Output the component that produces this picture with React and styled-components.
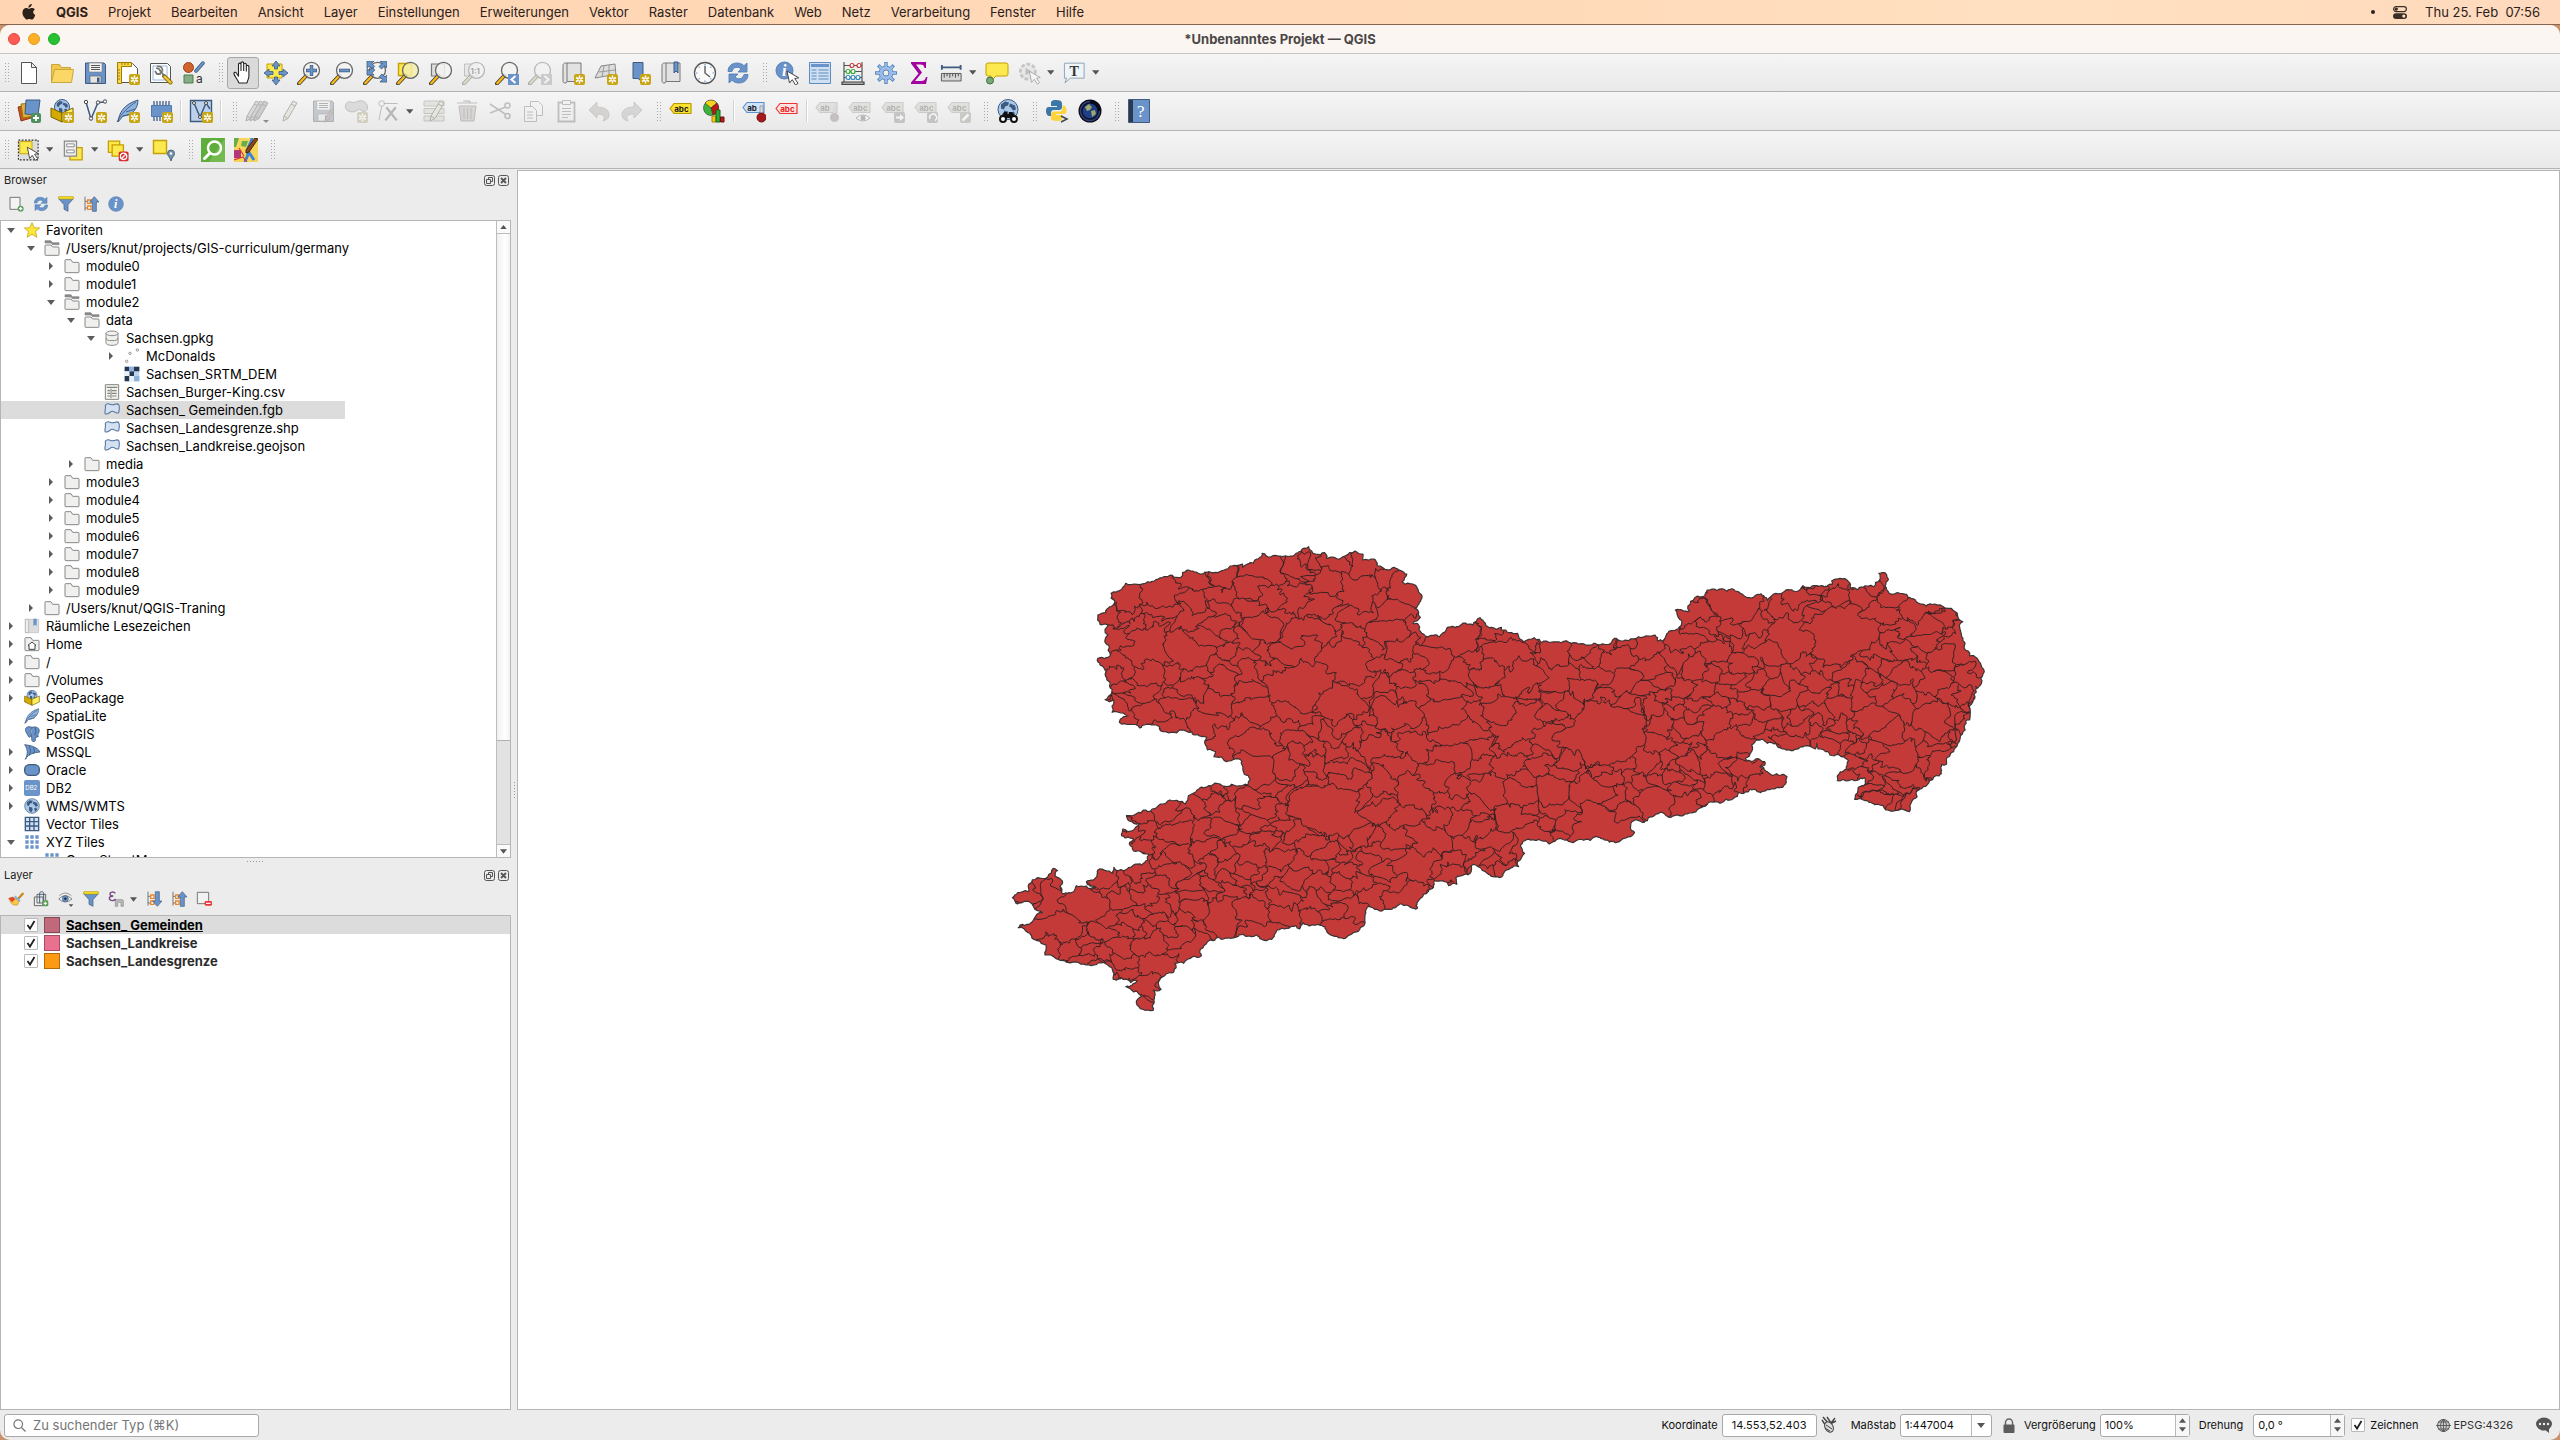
import React, { useState } from "react";
import styled, { createGlobalStyle, css } from "styled-components";

/* ------------------------------------------------------------------ */
/* Global                                                               */
/* ------------------------------------------------------------------ */

const GlobalStyle = createGlobalStyle`
  * { box-sizing: border-box; }
  html, body, #root { height: 100%; }
  body {
    margin: 0;
    overflow: hidden;
    background: #c9926c;
    color: #111;
    font-family: Inter, "Liberation Sans", sans-serif;
    font-size: 13px;
    line-height: 18px;
  }
  button, input, select { font: inherit; color: inherit; margin: 0; }
  button { padding: 0; border: 0; background: none; }
  ul { margin: 0; padding: 0; list-style: none; }
  svg { display: block; }
`;

const Desktop = styled.div`
  display: flex;
  flex-direction: column;
  height: 100vh;
`;

/* ------------------------------------------------------------------ */
/* System menu bar                                                      */
/* ------------------------------------------------------------------ */

const MenuBar = styled.header`
  display: flex;
  align-items: center;
  justify-content: space-between;
  flex: none;
  height: 25px;
  padding: 0 20px 0 22px;
  border-bottom: 1px solid #8a6450;
  background: linear-gradient(90deg, #ffd5b3, #ffdab9 60%, #ffe0c0 80%, #ffd9bd);
  color: #2b211b;
`;

const MenuList = styled.nav`
  display: flex;
  align-items: center;
  gap: 20px;
`;

const MenuItem = styled.button`
  font-weight: ${(p) => (p.$strong ? 700 : 400)};
  color: #2b211b;
`;

const MenuStatus = styled.div`
  display: flex;
  align-items: center;
  gap: 18px;
  white-space: pre;
`;

const Dot = styled.span`
  width: 4px;
  height: 4px;
  border-radius: 50%;
  background: #2b211b;
`;

const menus = [
  "Projekt", "Bearbeiten", "Ansicht", "Layer", "Einstellungen", "Erweiterungen",
  "Vektor", "Raster", "Datenbank", "Web", "Netz", "Verarbeitung", "Fenster", "Hilfe",
];

const Apple = () => (
  <svg width="14" height="16" viewBox="0 0 14 16" fill="#2b211b">
    <path d="M9.7 0c.1 1-.3 1.900-.9 2.600-.6.700-1.500 1.200-2.400 1.100-.1-.900.300-1.900.9-2.500C7.900.5 8.900 0 9.700 0zM12.900 5.400c-1 .6-1.700 1.500-1.700 2.700 0 1.400.9 2.500 2.100 3-.3 1-.8 1.900-1.400 2.800-.6.900-1.300 1.700-2.300 1.700-.9 0-1.200-.6-2.300-.6s-1.500.600-2.300.600c-1 0-1.700-.900-2.400-1.800C.9 12 .100 9.600.6 7.400 1 5.500 2.400 4.100 4.100 4.100c1 0 1.900.7 2.500.7.7 0 1.800-.8 3-.8 1.300 0 2.500.5 3.300 1.400z" />
  </svg>
);

const ControlCentre = () => (
  <svg width="14" height="13" viewBox="0 0 14 13">
    <rect x=".6" y=".6" width="12.800" height="5" rx="2.500" fill="none" stroke="#3b2e26" strokeWidth="1.200" />
    <circle cx="3.300" cy="3.100" r="1.700" fill="#3b2e26" />
    <rect x="0" y="7.200" width="14" height="5.800" rx="2.900" fill="#3b2e26" />
    <circle cx="10.800" cy="10.100" r="1.600" fill="#ffdfc2" />
  </svg>
);

/* ------------------------------------------------------------------ */
/* Window                                                               */
/* ------------------------------------------------------------------ */

const Window = styled.div`
  display: flex;
  flex-direction: column;
  flex: 1;
  min-height: 0;
  overflow: hidden;
  border-radius: 10px;
  background: #ececec;
`;

const TitleBar = styled.div`
  display: grid;
  grid-template-columns: 1fr auto 1fr;
  align-items: center;
  flex: none;
  height: 29px;
  padding: 0 8px;
  border-bottom: 1px solid #c9c5c3;
  background: #fcf6f3;
`;

const Lights = styled.div`
  display: flex;
  gap: 8px;
`;

const Light = styled.button`
  width: 12px;
  height: 12px;
  border-radius: 50%;
  border: 1px solid ${(p) => p.$edge};
  background: ${(p) => p.$fill};
`;

const WindowTitle = styled.h1`
  margin: 0;
  font-size: 13px;
  line-height: 18px;
  font-weight: 700;
  color: #4a4746;
`;

const ToolbarRow = styled.div`
  display: flex;
  align-items: center;
  flex: none;
  height: ${(p) => (p.$tall ? 39 : 38)}px;
  border-bottom: 1px solid #b4b4b4;
  background: linear-gradient(#f5f5f5, #e9e9e9);
`;

const Group = styled.div`
  display: flex;
  align-items: center;
  gap: 1px;
  margin-right: 4px;
`;

const Handle = styled.span`
  flex: none;
  width: 4px;
  height: 19px;
  margin: 0 3px 0 5px;
  background: conic-gradient(at 1px 1px, transparent 75%, #a8a8a8 0) 0 0 / 3px 3px;
`;

const Divider = styled.span`
  flex: none;
  width: 1px;
  height: 22px;
  margin: 0 2px 0 3px;
  background: #fff;
  box-shadow: -1px 0 0 #d2d2d2;
`;

const ToolButton = styled.button`
  display: flex;
  align-items: center;
  justify-content: flex-start;
  flex: none;
  width: ${(p) => (p.$menu ? 44 : 32)}px;
  height: 32px;
  padding: 0 3px;
  gap: 6px;
  border: 1px solid transparent;
  border-radius: 3px;
  ${(p) => p.$active && css`
    border-color: #a8a8a8;
    background: #dadada;
  `}
  & > svg:first-child { opacity: ${(p) => (p.disabled ? 0.4 : 1)}; filter: ${(p) => (p.disabled ? "grayscale(0.75)" : "none")}; }
`;

const Caret = ({ w = 8 }) => (
  <svg width={w} height="5" viewBox="0 0 8 5"><path d="M0 0h8L4 5z" fill="#555" /></svg>
);

/* ------------------------------------------------------------------ */
/* Icon parts                                                           */
/* ------------------------------------------------------------------ */

const BLUE = "#6a94c9";
const NAVY = "#3d5a80";
const GOLD = "#c4a000";
const YEL = "#fce94f";

const Star = ({ x = 13, y = 13 }) => (
  <g transform={`translate(${x} ${y})`}>
    <rect width="11" height="11" rx="2" fill="#c8a515" />
    <path d="M5.500 1.500v8M2 3.500l7 4M9 3.500l-7 4" stroke="#fff" strokeWidth="1.500" />
    <circle cx="5.500" cy="5.500" r="1" fill="#c8a515" />
  </g>
);

const Lens = ({ children, fill = "#f3f3f1" }) => (
  <g>
    <path d="M9.500 14.500 2 22.500" stroke="#3a3a3a" strokeWidth="4" strokeLinecap="round" />
    <path d="M9 15 2.300 22.200" stroke="#fcb912" strokeWidth="2.400" strokeLinecap="round" />
    <circle cx="14.500" cy="9.300" r="8" fill={fill} fillOpacity=".85" stroke="#666" strokeWidth="1.300" />
    {children}
  </g>
);

const Cursor = ({ x = 11, y = 10 }) => (
  <path transform={`translate(${x} ${y})`} d="M0 0l2.500 12 2.800-3.300L8.500 14l2.500-1.700L7.700 7.600l4-.8z" fill="#fff" stroke="#444" strokeLinejoin="round" />
);

const Tag = ({ fill, edge, ink, text = "abc" }) => (
  <g>
    <path d="M1 8.500 5 3.500h17v10H5z" fill={fill} stroke={edge} strokeWidth="1.200" strokeLinejoin="round" />
    <text x="5.200" y="11.500" fontFamily="Inter, sans-serif" fontSize="8" fontWeight="700" fill={ink}>{text}</text>
  </g>
);

const Pencil = ({ x = 0, y = 0, fill = "#e8dc7a" }) => (
  <path transform={`translate(${x} ${y})`} d="M4 22l1-5L14 2l4 2-9 15.500zM5 17l4 2.500M12 5l4 2" fill={fill} stroke="#555" strokeLinejoin="round" />
);

const Globe = ({ cx = 12, cy = 12, r = 10 }) => (
  <g>
    <circle cx={cx} cy={cy} r={r} fill="#a9c8ea" stroke={NAVY} />
    <path
      transform={`translate(${cx - r} ${cy - r}) scale(${r / 10})`}
      d="M3 5l4-3 4 1-1 3-3 1-1 3-3-1zM12 4l5 2 1 4-3 1-2-3-2-1zM6 11l4 1 1 3-2 4-3-3zM13 13l3-1 1 3-3 3z"
      fill={NAVY}
    />
  </g>
);

const Refresh = () => (
  <g fill={BLUE} stroke="#4b79b0" strokeWidth=".8">
    <path d="M2 10.500C2 5 6 2 11 2c3 0 5 1 7 2.700L21 2v9h-9l3-3c-3-3-8-2-9 2.500z" />
    <path d="M22 13.500C22 19 18 22 13 22c-3 0-5-1-7-2.700L3 22v-9h9l-3 3c3 3 8 2 9-2.500z" />
  </g>
);

const Page = () => (
  <path d="M4.500 1.500h10l5 5v16h-15z M14.500 1.500v5h5" fill="#fff" stroke="#555" strokeLinejoin="round" />
);

const Floppy = () => (
  <g>
    <path d="M2.500 2h18.500l1.500 1.500v19h-20z" fill={BLUE} stroke={NAVY} />
    <path d="M6 2h13v9H6z" fill="#f4f4f4" stroke="#777" strokeWidth=".6" />
    <path d="M8 4.500h9M8 6.500h9M8 8.500h9" stroke="#555" />
    <path d="M7 15h11v7H7z" fill="#e4e4e4" stroke="#555" strokeWidth=".6" />
    <path d="M14 16.500h2.500v5H14z" fill={NAVY} />
  </g>
);

const Book = () => (
  <g>
    <path d="M2 4.500C2 3 3 2 4.500 2H20v18.500H6L5 22H3.500C2.500 22 2 21 2 20z" fill="#e2e2e2" stroke="#777" />
    <path d="M6 2v18.500" stroke="#777" />
  </g>
);

const Arrows4 = ({ children }) => (
  <g fill={BLUE} stroke={NAVY} strokeWidth=".8" strokeLinejoin="round">{children}</g>
);

const Feather = () => (
  <g>
    <path d="M2 23C3 14 8 5 22 1c0 7-4 15-15 16z" fill="#8db4e0" stroke={NAVY} />
    <path d="M1 23C5 15 12 8 20 3M7 17l9-2M10 13l9-3" stroke={NAVY} fill="none" strokeWidth=".9" />
  </g>
);

const PkgBox = () => (
  <g>
    <Globe cx={12} cy={8} r={7.5} />
    <path d="M1 9l11 5v9L1 18z" fill="#d4aa00" stroke="#7a6200" strokeLinejoin="round" />
    <path d="M23 9l-11 5v9l11-5z" fill="#fff060" stroke="#7a6200" strokeLinejoin="round" />
  </g>
);

const Speech = ({ fill, edge }) => (
  <path d="M3 2h18q2 0 2 2v9q0 2-2 2H11l-5 5V15H3q-2 0-2-2V4q0-2 2-2z" fill={fill} stroke={edge} />
);

/* Drawings on a 24 unit grid */
const glyphs = {
  newDoc: <Page />,
  open: (
    <g stroke="#c9a63c" strokeLinejoin="round">
      <path d="M1.500 21.500v-18h8l2 3h9v4" fill="#f2c84b" />
      <path d="M1.500 21.500l3-13h19l-2 13z" fill="#fbd866" />
    </g>
  ),
  save: <Floppy />,
  layout: (
    <g>
      <path d="M5.500 2.500h11l5 5v14h-16z" fill="#fff" stroke="#555" />
      <path d="M1.500 1.500h14v4h-10v17h-4z" fill="#f7d64a" stroke="#a07d00" />
      <path d="M6 2v2M9 2v2M12 2v2M2 9h2M2 12h2M2 15h2M2 18h2" stroke="#a07d00" />
      <Star />
    </g>
  ),
  layoutMgr: (
    <g>
      <path d="M1.500 2.500h17l3 3v16h-20z" fill="#fff" stroke="#555" />
      <path d="M4 5h14v14H4z" fill="none" stroke="#9ab6e0" />
      <path d="M15 15l6.500 6.500" stroke="#8a6d00" strokeWidth="4" strokeLinecap="round" />
      <path d="M15.500 15.500l6 6" stroke="#f1c53d" strokeWidth="2.400" strokeLinecap="round" />
      <path d="M7 7l3 1 2 3-1 2-3 0-2-3M10 8l5.500 7M8 5.500c4-1 6 2 5.500 5" fill="none" stroke="#777" strokeWidth="1.800" />
    </g>
  ),
  style: (
    <g>
      <circle cx="6.500" cy="6.500" r="5" fill="#d0622e" stroke="#9c4319" />
      <path d="M14 10l7-8" stroke={NAVY} strokeWidth="3.500" strokeLinecap="round" />
      <path d="M14 10l7-8" stroke={BLUE} strokeWidth="2" strokeLinecap="round" />
      <path d="M2 14h9v8H2z" fill="#86ad86" stroke="#4c7a4c" />
      <text x="14" y="22" fontFamily="Inter, sans-serif" fontSize="12" fill="#333">a</text>
    </g>
  ),
  hand: (
    <path d="M8 22c-1-3-4-6-5-9-.6-1.800 1.600-2.300 2.500-.8l2 3V3.500c0-1.800 2.500-1.800 2.500 0V2.200c0-1.800 2.700-1.800 2.700 0v1.300c0-1.600 2.600-1.600 2.600 0v2c0-1.600 2.600-1.500 2.600 0V15c0 3-1.400 4-1.900 7z M10 3.500V10M12.700 3.500V10M15.300 5.500V10.500" fill="#fff" stroke="#222" strokeWidth="1.100" strokeLinejoin="round" />
  ),
  panSel: (
    <g>
      <path d="M3 3h15v14H3z" fill={YEL} stroke={GOLD} />
      <Arrows4><path d="M12 0l4 5h-2.500v3h-3V5H8zM12 24l-4-5h2.500v-3h3v3H16zM0 12l5-4v2.500h4v3H5V16zM24 12l-5 4v-2.500h-4v-3h4V8z" /></Arrows4>
    </g>
  ),
  zoomIn: <Lens><path d="M14.500 4v11M9 9.500h11" stroke={NAVY} strokeWidth="3.400" /><path d="M14.500 4.600v9.800M9.600 9.500h9.800" stroke={BLUE} strokeWidth="2" /></Lens>,
  zoomOut: <Lens><path d="M9 9.500h11" stroke={NAVY} strokeWidth="3.600" /><path d="M9.600 9.500h9.800" stroke={BLUE} strokeWidth="2" /></Lens>,
  zoomFull: (
    <Lens>
      <Arrows4>
        <path d="M4 0h7L8.700 2.500l3 3-2.500 2.500-3-3L4 7zM24 0v7l-2.400-2-3 3L16 5.500l3-3L17 0zM24 21h-7l2.300-2.500-3-3L19 13l3 3 2-2zM4 14V7.500l2.300 2 3-3 2.500 2.500-3 3 2.200 2z" />
      </Arrows4>
    </Lens>
  ),
  zoomSel: <g><path d="M2.500 2.500h13v12h-13z" fill={YEL} stroke={GOLD} strokeWidth="1.400" /><Lens fill="#f5efab" /></g>,
  zoomLayer: <g><path d="M2.500 3h13v12h-13z" fill="#ddd" stroke="#777" strokeWidth="1.200" /><Lens /></g>,
  zoomOne: (
    <g><path d="M2.500 3h13v12h-13z" fill="#ddd" stroke="#777" /><Lens><text x="8.500" y="12.500" fontFamily="Inter, sans-serif" fontSize="8" fontWeight="700" fill="#333">1:1</text></Lens></g>
  ),
  zoomLast: <g><Lens /><path d="M13 13h11v11H13z" fill={BLUE} /><path d="M20.500 15l-4 3.500 4 3.500" fill="none" stroke="#fff" strokeWidth="2" /></g>,
  zoomNext: <g><Lens /><path d="M13 13h11v11H13z" fill="#999" /><path d="M16.500 15l4 3.500-4 3.500" fill="none" stroke="#fff" strokeWidth="2" /></g>,
  newMap: <g><Book /><Star /></g>,
  new3d: <g><path d="M1 17L7 5l14-2 1 12-10 0z" fill="#ddd" stroke="#888" /><path d="M5 11l16-2M10 5L8 16M15 4v12" stroke="#999" fill="none" /><Star /></g>,
  newBookmark: <g><path d="M6 1.500h10v20l-5-4-5 0z" fill={BLUE} stroke={NAVY} /><Star /></g>,
  bookmarks: <g><Book /><path d="M14 1h4v11l-2-2-2 2z" fill={BLUE} stroke={NAVY} /></g>,
  clock: (
    <g>
      <circle cx="12" cy="12" r="10.500" fill="#fafafa" stroke="#555" strokeWidth="1.300" />
      <path d="M12 5v7l5 4" fill="none" stroke="#666" strokeWidth="1.500" />
      <path d="M12 3v1.500M12 19.500V21M3 12h1.500M19.500 12H21M5.600 5.600l1 1M18.400 5.600l-1 1M5.600 18.400l1-1M18.400 18.400l-1-1" stroke="#6a94c9" strokeWidth="1.200" />
    </g>
  ),
  refresh: <Refresh />,
  identify: (
    <g>
      <circle cx="9.500" cy="9.500" r="8.500" fill={BLUE} stroke="#557fb4" />
      <text x="7" y="15" fontFamily="Liberation Serif, serif" fontSize="16" fontWeight="700" fontStyle="italic" fill="#fff">i</text>
      <Cursor x={12} y={10} />
    </g>
  ),
  table: (
    <g>
      <path d="M1.500 1.500h21v21h-21z" fill="#cfe0f3" stroke="#5f8cc0" />
      <path d="M3 3h18v3H3z" fill={BLUE} />
      <path d="M3.500 9h5M10.500 9h10M3.500 12h5M10.500 12h10M3.500 15h5M10.500 15h10M3.500 18h5M10.500 18h10" stroke="#5f8cc0" strokeWidth="1.200" />
    </g>
  ),
  abacus: (
    <g fill="none" strokeWidth="1.200">
      <path d="M3 1v20M21 1v20M3 4.500h18M3 10.500h18M3 16.500h18" stroke="#555" />
      <path d="M1 21h22v2.500H1z" fill="#aaa" stroke="#444" />
      <g fill="#fff"><circle cx="11" cy="4.500" r="2" stroke="#c33" /><circle cx="18" cy="4.500" r="2" stroke="#c33" /><circle cx="7" cy="10.500" r="2" stroke="#3a3" /><circle cx="12" cy="10.500" r="2" stroke="#3a3" /><circle cx="7" cy="16.500" r="2" stroke="#38b" /><circle cx="12" cy="16.500" r="2" stroke="#38b" /><circle cx="17" cy="16.500" r="2" stroke="#38b" /></g>
    </g>
  ),
  gear: (
    <g>
      <g stroke="#5b87bf" strokeWidth="3.400">
        <path d="M12 1v22M1 12h22M4.200 4.200l15.600 15.600M19.800 4.200L4.200 19.800" />
      </g>
      <circle cx="12" cy="12" r="7" fill="#9abce6" stroke="#5b87bf" />
      <g stroke="#9abce6" strokeWidth="1.800"><path d="M12 2v20M2 12h20M5 5l14 14M19 5L5 19" /></g>
      <circle cx="12" cy="12" r="3" fill="#eee" stroke="#5b87bf" />
    </g>
  ),
  sigma: <path d="M4 1h15v6h-1.500c-.5-2.500-1.500-3.500-4-3.500H9l6 8-7 8.500h6c3 0 4-1 5-4h1.500L19 23H4v-1.500L11.500 12.500 4 2.500z" fill="#a4009f" />,
  measure: (
    <g>
      <path d="M2 6h20M2 3.500v5M22 3.500v5" stroke={NAVY} strokeWidth="2" />
      <path d="M1.500 12.500h21v8h-21z" fill="#d6d6d6" stroke="#555" />
      <path d="M4.500 13v4M7.500 13v2.500M10.500 13v4M13.500 13v2.500M16.500 13v4M19.500 13v2.500" stroke="#444" />
    </g>
  ),
  tip: <g><Speech fill={YEL} edge={GOLD} /><circle cx="5" cy="19.500" r="3.500" fill="#78a878" stroke="#3f6f3f" /></g>,
  action: (
    <g>
      <circle cx="10.500" cy="10.500" r="8" fill="#ddd" stroke="#888" strokeWidth="3" strokeDasharray="4 2" />
      <path d="M8 6.500l6.500 4L8 14.500z" fill="#777" />
      <Cursor x={12} y={10} />
    </g>
  ),
  annot: (
    <g>
      <path d="M1.500 1.500h21v16H8l-6 5 2-5H1.500z" fill="#eef4f8" stroke="#8aa0b0" />
      <text x="7" y="15" fontFamily="Liberation Serif, serif" fontSize="15" fontWeight="700" fill="#333">T</text>
    </g>
  ),
  dataSource: (
    <g>
      <path d="M1 8l10-2 3 13-10 3z" fill="#c8551f" stroke="#8d3a12" />
      <path d="M4 5l12-1 1 13-11 2z" fill="#e0b03a" stroke="#9a7510" />
      <path d="M9 1l14-0-2 15-13-1z" fill={BLUE} stroke={NAVY} />
      <rect x="14" y="14" width="10" height="10" rx="2" fill="#4d8f5d" />
      <path d="M19 16v6M16 19h6" stroke="#fff" strokeWidth="1.800" />
    </g>
  ),
  geopkg: <g><PkgBox /><Star /></g>,
  shapefile: (
    <g>
      <path d="M3 3l5 17L15 3.500 22 3" fill="none" stroke={NAVY} strokeWidth="1.500" />
      <g fill="#fff" stroke="#444"><circle cx="3" cy="3" r="1.700" /><circle cx="8" cy="19.500" r="1.700" /><circle cx="15" cy="3.500" r="1.700" /><circle cx="22" cy="2.500" r="1.700" /></g>
      <Star />
    </g>
  ),
  spatialite: <g><Feather /><Star /></g>,
  memory: (
    <g>
      <path d="M5 2v20M8 2v20M11 2v20M14 2v20M17 2v20M20 2v20" stroke={NAVY} strokeWidth="1.300" />
      <path d="M2.500 6.500h20v11h-20z" fill={BLUE} stroke="#4f7ab0" />
      <Star />
    </g>
  ),
  virtual: (
    <g>
      <path d="M1.500 1.500h21v21h-21z" fill="#bdd2ea" stroke={NAVY} strokeWidth="1.400" />
      <path d="M5 4l6 14L17 4l4 6" fill="none" stroke={NAVY} strokeWidth="1.500" />
      <g fill="#fff" stroke="#444"><circle cx="5" cy="4" r="1.500" /><circle cx="11" cy="18" r="1.500" /><circle cx="17" cy="4" r="1.500" /></g>
      <Star />
    </g>
  ),
  edits: <g><Pencil x={-3} fill="#c9b9a9" /><Pencil x={1} fill="#b8a0a0" /><Pencil x={5} fill="#a89090" /><path d="M18 21h6l-3 3z" fill="#000" /></g>,
  pencil: <Pencil x={1} />,
  saveEdits: <g><Floppy /><g transform="translate(11 9) scale(.65)"><Pencil fill="#d9735a" /></g></g>,
  addPoly: <g><path d="M2 5c3-5 6 0 10-2s9-2 11 3-2 8-5 6-3-2-6 0-13 1-10-7z" fill="#bbb" stroke="#777" /><Star /></g>,
  vertex: <g fill="none" stroke="#666"><path d="M7 4h15M5 7L2 22" /><circle cx="5" cy="4" r="3" /><path d="M10 8l11 14M20 8L9 22" strokeWidth="2.500" /></g>,
  modify: <g><path d="M2 2h20v5H2zM2 9.500h20v5H2zM2 17h20v5H2z" fill="#d8d3a0" stroke="#888" /><Pencil x={4} /></g>,
  del: <g fill="#c9a9a9" stroke="#9a6a6a"><path d="M2 4h20M8 2h7v2M4 7h17l-2 15H6z" /><path d="M9 9v11M12.500 9v11M16 9v11" /></g>,
  cut: <g fill="none" stroke="#777" strokeWidth="1.600"><path d="M2 5l15 10M2 14l16-6" /><circle cx="19.500" cy="6.500" r="2.500" /><circle cx="19.500" cy="17" r="2.500" /></g>,
  copy: <g fill="#f4f4f4" stroke="#777"><path d="M9.500 2.500h8l4 4v10h-12z" /><path d="M3.500 7.500h8l4 4v11h-12z" /><path d="M6 13h6M6 16h6M6 19h6" /></g>,
  paste: <g fill="#f0f0f0" stroke="#777"><path d="M4.500 3.500h16v19h-16z" strokeWidth="1.800" /><path d="M8.500 1.500h8v4h-8z" /><path d="M8 9.500h9M8 12.500h9M8 15.500h9M8 18.500h6" /></g>,
  undo: <path d="M2 11l8-8v5c8 0 12 3 12 8 0 3-2 5-6 6 3-5 0-7-6-7v4z" fill="#b7a9a0" stroke="#9b8d85" />,
  redo: <path d="M22 11l-8-8v5c-8 0-12 3-12 8 0 3 2 5 6 6-3-5 0-7 6-7v4z" fill="#a9b3a9" stroke="#8a958a" />,
  label: <g transform="translate(0 1)"><Tag fill="#fbe12d" edge="#b89b00" ink="#222" /></g>,
  diagram: (
    <g>
      <circle cx="9" cy="9" r="7.500" fill="#3cb43c" stroke="#333" strokeWidth=".6" />
      <path d="M9 9L3 4a7.500 7.500 0 0 1 12 0z" fill="#f5d21f" stroke="#333" strokeWidth=".6" />
      <path d="M9 9l6-5a7.500 7.500 0 0 1-4 12z" fill="#c01818" stroke="#333" strokeWidth=".6" />
      <path d="M10 17h4v6h-4z" fill="#f5c21f" stroke="#a80" /><path d="M14 11h4v12h-4z" fill="#3a3" stroke="#161" /><path d="M18.500 18H22v5h-3.500z" fill="#c01818" stroke="#611" />
    </g>
  ),
  pinLabel: <g><Tag fill="#cfe3fb" edge="#5b8fd0" ink="#222" text="ab" /><path d="M18 7h3v9h-3z" fill="#ddd" stroke="#777" strokeWidth=".6" /><circle cx="19.500" cy="18.500" r="4.500" fill="#a8181c" stroke="#6b0e10" /></g>,
  unplaced: <g transform="translate(0 1)"><Tag fill="#ffe3e3" edge="#e33" ink="#e22" /></g>,
  lab1: <g><Tag fill="#ccc9a4" edge="#999" ink="#555" text="ab" /><path d="M18 7h3v9h-3z" fill="#bbb" /><circle cx="19.500" cy="18.500" r="4.500" fill="#a77" /></g>,
  lab2: <g><Tag fill="#ccc9a4" edge="#999" ink="#555" /><path d="M8 19q7-6 14 0-7 6-14 0z" fill="#fff" stroke="#666" /><circle cx="15" cy="19" r="2.500" fill="#666" /></g>,
  lab3: <g><Tag fill="#ccc9a4" edge="#999" ink="#555" /><rect x="13" y="13" width="11" height="11" rx="2" fill="#888" /><path d="M15 17.500h4V15l4 3.500-4 3.500v-2.500h-4z" fill="#fff" /></g>,
  lab4: <g><Tag fill="#ccc9a4" edge="#999" ink="#555" /><rect x="13" y="13" width="11" height="11" rx="2" fill="#888" /><path d="M16 20a3.500 3.500 0 1 1 5 1.500" fill="none" stroke="#fff" strokeWidth="1.600" /></g>,
  lab5: <g><Tag fill="#ccc9a4" edge="#999" ink="#555" /><rect x="13" y="13" width="11" height="11" rx="2" fill="#999570" /><path d="M15.500 21.500l6-6" stroke="#fff" strokeWidth="2.500" /></g>,
  metasearch: (
    <g>
      <Globe cx={12} cy={10.5} r={10} />
      <path d="M4 19l4-6h3v2h2v-2h3l5 6z" fill="#111" />
      <g fill="#fff" stroke="#111" strokeWidth="2"><circle cx="7" cy="20" r="3" /><circle cx="18" cy="20" r="3" /></g>
    </g>
  ),
  python: (
    <g>
      <path d="M11 1c-5 0-5 2-5 3.500V7h6v1H3.500C1 8 1 11 1 12.500S2 17 4 17h2v-3c0-2 1-3 3-3h5c2 0 3-1 3-3V4.500C17 2 15 1 11 1z" fill="#3b78a8" />
      <path d="M12 22c5 0 5-2 5-3.500V16h-6v-1h7.500c3 0 3-2.500 3-4s-1-4.500-3-4.500h-1v3c0 2-1 3-3 3H9c-2 0-3 1-3 3v4C6 21 8 22 12 22z" fill="#fdd43b" />
      <path d="M16 17l6 3-6 3" fill="none" stroke="#444" strokeWidth="1.500" />
    </g>
  ),
  earth: (
    <g>
      <circle cx="12" cy="12" r="11.500" fill="#0a0a18" />
      <circle cx="12" cy="12" r="7.500" fill="#1d3f86" />
      <path d="M7 8l4-3 3 3-2 3-3 1zM13 12l4-1 1 4-4 3z" fill="#9aa86a" />
      <path d="M12 2.500a9.500 9.500 0 1 0 9.500 9.500" fill="none" stroke="#34407c" strokeWidth="1.500" />
    </g>
  ),
  help: (
    <g>
      <path d="M1.500 .5h21v23h-21z" fill={BLUE} stroke={NAVY} />
      <path d="M2 1h4v22H2z" fill="#2b3a4c" />
      <text x="10" y="18" fontFamily="Liberation Serif, serif" fontSize="17" fill="#fff">?</text>
    </g>
  ),
  select: (
    <g>
      <path d="M1.500 1.500h21v21h-21z" fill="#ddd" stroke="#333" strokeDasharray="2 1.500" strokeWidth="1.200" />
      <path d="M3 3h13v13H3z" fill={YEL} stroke={GOLD} />
      <Cursor x={11} y={9} />
    </g>
  ),
  selForm: (
    <g>
      <path d="M8.500 9.500h13v13h-13z" fill={YEL} stroke={GOLD} strokeWidth="1.400" />
      <path d="M2.500 2.500h13v16h-13z" fill="#eee" stroke="#888" strokeWidth="1.300" />
      <path d="M5 5.500h8v3H5zM5 12h8v3H5z" fill="#fff" stroke="#888" />
    </g>
  ),
  deselect: (
    <g>
      <path d="M1.500 2.500h12v12h-12z" fill={YEL} stroke={GOLD} strokeWidth="1.400" />
      <path d="M5.500 6.500h12v12h-12z" fill={YEL} stroke={GOLD} strokeWidth="1.400" />
      <rect x="12.500" y="13.500" width="10.500" height="10.500" rx="2" fill="#d9292b" />
      <circle cx="17.700" cy="18.700" r="3.400" fill="none" stroke="#fff" strokeWidth="1.400" /><path d="M15.500 21l4.500-4.500" stroke="#fff" strokeWidth="1.400" />
    </g>
  ),
  selLoc: (
    <g>
      <path d="M1.500 2.500h13v13h-13z" fill={YEL} stroke={GOLD} strokeWidth="1.400" />
      <path d="M19 23c-1-4-3.500-5-3.500-7.500a3.500 3.500 0 0 1 7 0C22.500 18 20 19 19 23z" fill="#6f90a8" stroke="#4a6a80" /><circle cx="19" cy="15.500" r="1.300" fill="#fff" />
    </g>
  ),
  quickMap: (
    <g>
      <path d="M0 0h24v24H0z" fill="#5fae3c" />
      <path d="M24 0v24H8z" fill="#83c25f" opacity=".6" />
      <circle cx="13.500" cy="10" r="6.500" fill="none" stroke="#fff" strokeWidth="2.400" /><path d="M9 15l-5.500 5.500" stroke="#fff" strokeWidth="3" strokeLinecap="round" />
    </g>
  ),
  osm: (
    <g>
      <path d="M0 0h24v24H0z" fill="#f6d55a" />
      <path d="M0 0h5l-3 9H0zM8 3h6l-2 6-5-1z" fill="#63b04a" /><path d="M0 12h7v8H0z" fill="#b0387a" />
      <path d="M11 24c1-5 4-6 3-11s4-8 4-13M14 13l6 9" fill="none" stroke="#3f83d6" strokeWidth="3" />
      <path d="M0 22l9-3 4 5M5 10l5 8" fill="none" stroke="#d33" strokeWidth="1.200" />
      <path d="M12 15l3-1 9-13-3-1-9 12z" fill="#8a4a1c" stroke="#4a2408" />
    </g>
  ),
  /* panel drawings */
  addItem: <g><path d="M3 2h15v18H3z" fill="#f4f4f4" stroke="#777" strokeWidth="1.500" /><circle cx="19" cy="19" r="4.500" fill="#5da05d" /><path d="M19 16.500v5M16.500 19h5" stroke="#fff" strokeWidth="1.800" /></g>,
  filter: <g><path d="M1 4h22l-8 9v10l-6-3v-7z" fill={BLUE} stroke={NAVY} /><path d="M1 1h22v3.500H1z" fill="#fbe12d" stroke="#b89b00" /></g>,
  collapse: <g><path d="M3 1v21M3 8h6M3 18h6" fill="none" stroke="#777" strokeWidth="1.500" /><path d="M7 6h5v5H7zM7 15h5v5H7z" fill="#fff" stroke="#e8862a" strokeWidth="2" /><path d="M17 1l7 8h-4v14h-6V9h-4z" fill={BLUE} stroke={NAVY} /></g>,
  expand: <g><path d="M3 1v21M3 8h6M3 18h6" fill="none" stroke="#777" strokeWidth="1.500" /><path d="M7 6h5v5H7zM7 15h5v5H7z" fill="#fff" stroke="#e8862a" strokeWidth="2" /><path d="M17 23l7-8h-4V1h-6v14h-4z" fill={BLUE} stroke={NAVY} /></g>,
  info: <g><circle cx="12" cy="12" r="11" fill={BLUE} stroke="#557fb4" /><text x="9" y="18" fontFamily="Liberation Serif, serif" fontSize="18" fontWeight="700" fontStyle="italic" fill="#fff">i</text></g>,
  brush: <g><path d="M15 12l7-8" stroke="#c98b1c" strokeWidth="3.500" strokeLinecap="round" /><path d="M1 11l6-2 10 6-3 6-6 0-4-4z" fill="#f5c945" stroke="#c98b1c" /><path d="M1 11l6-2 4 3-5 5z" fill="#e2452f" /><path d="M10 8l8 7" stroke="#7fb4e4" strokeWidth="3" /></g>,
  addGroup: <g fill="#eee" stroke="#666" strokeWidth="1.500"><path d="M2 9h13v13H2zM6 5h13v13H6z" /><path d="M10 18V4c0-4 6-4 6 0v11" fill="none" stroke={NAVY} /><rect x="14" y="14" width="9" height="9" rx="2" fill="#5da05d" stroke="none" /><path d="M18.500 16v5M16 18.500h5" stroke="#fff" /></g>,
  eye: <g><path d="M1 12Q11 2 21 12 11 21 1 12z" fill="#f4f4f4" stroke="#777" strokeWidth="1.300" /><circle cx="11" cy="11.500" r="4.500" fill={BLUE} stroke={NAVY} /><circle cx="11" cy="11.500" r="1.800" fill="#223" /><path d="M2 7q9-8 18 0" fill="none" stroke="#999" strokeWidth="1.500" /><path d="M16 20h7l-3.500 4z" fill="#555" /></g>,
  epsilon: <g><path d="M11 3.500C9 .5 3 1 3 4.500c0 2.500 2 3 5 3-4 0-6 1-6 3.500 0 4 7 4.500 9.500 1" fill="none" stroke="#7a4a86" strokeWidth="2" /><path d="M11 23v-8q0-2 2-2h8q2 0 2 2v8h-3.500v-6h-5v6z" fill="#bbb" stroke="#888" /></g>,
  removeItem: <g><path d="M2 2h17v17H2z" fill="#f2f2f2" stroke="#777" strokeWidth="1.500" /><rect x="13" y="15" width="11" height="7" rx="2" fill="#e33" /><path d="M15 18.500h7" stroke="#fff" strokeWidth="1.800" /></g>,
  /* tree drawings */
  star: <path d="M12 1l3.200 7.600L23.500 9l-6.300 5.300L19.300 23 12 18.200 4.700 23l2.100-8.700L.5 9l8.300-.4z" fill="#fbe83a" stroke="#c9a81c" strokeWidth="1.300" strokeLinejoin="round" />,
  folder: <path d="M1.500 3.500q0-1 1-1h8l2.500 4h8.500q1 0 1 1V21q0 1-1 1h-19q-1 0-1-1z" fill="#f0f0ef" stroke="#888" strokeWidth="1.500" />,
  folderOpen: <g><path d="M1.500 1h9l2 3h10v3h-10l-2-2.500h-9z" fill="#888" stroke="#888" /><path d="M1.500 8.500q0-1 1-1h8l2.500 3h8.500q1 0 1 1V22q0 1-1 1h-19q-1 0-1-1z" fill="#f0f0ef" stroke="#888" strokeWidth="1.500" /></g>,
  db: <g fill="#f0f0ee" stroke="#8a8a85" strokeWidth="1.500"><path d="M3 5v14q0 4 9 4t9-4V5" /><path d="M3 12q0 4 9 4t9-4" fill="none" /><ellipse cx="12" cy="5" rx="9" ry="3.500" /></g>,
  points: <g fill="#fff" stroke="#888" strokeWidth="1.300"><circle cx="4" cy="20" r="1.800" /><circle cx="9" cy="8" r="1.800" /><circle cx="20" cy="3" r="1.800" /></g>,
  raster: <g><path d="M1 1h22v22H1z" fill="#bcd3ee" /><path d="M1 1h7v7H1zM15 1h8v7h-8zM8 8h7v7H8zM1 15h7v8H1z" fill="#26364e" /><path d="M8 1h7v7H8zM15 15h8v8h-8z" fill="#8fb2dc" /><path d="M8 15h7v8H8zM1 8h7v7H1z" fill="#e8f0fa" /></g>,
  sheet: <g><path d="M2 1h20v22H2z" fill="#f3f3f1" stroke="#85857f" strokeWidth="1.500" /><path d="M4 5h16M5 10h4M5 14h4M5 18h4M12 10h7M12 14h7M12 18h7M10.500 7v14" stroke="#85857f" strokeWidth="1.700" /></g>,
  polygon: <path d="M2 5c3-5 7-1 11-1s7-3 9 0 1 7 0 12c-5 2-6-3-10-2s-5 5-10 4c-2-3 1-5 0-13z" fill="#d3e1f2" stroke="#54749c" strokeWidth="1.600" />,
  bookmarkTree: <g><path d="M2 2h20v20H2z" fill="#dcdcdc" stroke="#bbb" /><path d="M2 2h5v20H2z" fill="#ededed" stroke="#aaa" /><path d="M14 1h5v11l-2.500-2-2.500 2z" fill={BLUE} /></g>,
  home: <g><path d="M1.500 3.500q0-1 1-1h8l2.500 4h8.500q1 0 1 1V21q0 1-1 1h-19q-1 0-1-1z" fill="#f0f0ef" stroke="#888" strokeWidth="1.500" /><path d="M6 14l6-5 6 5h-1.500v6h-9v-6z" fill="#fff" stroke="#333" strokeWidth="1.400" /></g>,
  pkg: <PkgBox />,
  feather: <Feather />,
  elephant: <path d="M3 3c3-3 6-2 9-1 3-1 8-1 10 2s0 8-3 11h3l-3 2h-2v5c-1 2-4 2-5 0l-1-8c-1 2-3 4-4 2L3 9c-1-3-1-5 0-6z M12 2q-3 5-1 12M17 3q2 6-1 11" fill={BLUE} stroke={NAVY} strokeWidth="1.300" />,
  sail: <path d="M1 1c8 1 19 3 23 11-8 1-17 2-22 11 4-8 4-15-1-22z M8 3q4 7 0 14M14 5q4 6 0 10" fill={BLUE} stroke={NAVY} strokeWidth="1.300" />,
  oracle: <rect x="1" y="4" width="22" height="16" rx="7" fill={BLUE} stroke={NAVY} strokeWidth="2" />,
  db2: <g><rect width="24" height="24" rx="3" fill={BLUE} /><text x="2" y="15" fontFamily="Inter, sans-serif" fontSize="9" fill="#fff">DB2</text></g>,
  globe: <Globe r={11} />,
  gridDark: <g><path d="M2 2h20v20H2z" fill="#cfe0f3" stroke={NAVY} strokeWidth="2" /><path d="M8.500 2v20M15 2v20M2 8.500h20M2 15h20" stroke={NAVY} strokeWidth="2" /></g>,
  tiles: <path d="M2 2h5v5H2zM9.500 2h5v5h-5zM17 2h5v5h-5zM2 9.500h5v5H2zM9.500 9.500h5v5h-5zM17 9.500h5v5h-5zM2 17h5v5H2zM9.500 17h5v5h-5zM17 17h5v5h-5z" fill={BLUE} />,
};

const Glyph = ({ name, size = 24 }) => (
  <svg width={size} height={size} viewBox="0 0 24 24" fill="none" aria-hidden="true">{glyphs[name]}</svg>
);

/* ------------------------------------------------------------------ */
/* Toolbars                                                             */
/* ------------------------------------------------------------------ */

/* "|" is a divider; suffixes: ">" opens a menu, "!" disabled, "*" pressed */
const toolbars = [
  [
    ["newDoc", "open", "save", "layout", "layoutMgr", "style"],
    ["hand*", "panSel", "zoomIn", "zoomOut", "zoomFull", "zoomSel", "zoomLayer", "zoomOne!", "zoomLast", "zoomNext!", "newMap", "new3d", "newBookmark", "bookmarks", "clock", "refresh"],
    ["identify", "table", "abacus", "gear", "sigma", "measure>", "tip", "action!>", "annot>"],
  ],
  [
    ["dataSource", "geopkg", "shapefile", "spatialite", "memory", "|", "virtual", "|"],
    ["edits!", "pencil!", "saveEdits!", "addPoly!", "vertex!>", "modify!", "del!", "cut!", "copy!", "paste!", "undo!", "redo!"],
    ["label", "diagram", "|", "pinLabel", "unplaced", "|", "lab1!", "lab2!", "lab3!", "lab4!", "lab5!"],
    ["metasearch"],
    ["python", "earth"],
    ["help"],
  ],
  [
    ["select>", "selForm>", "deselect>", "selLoc"],
    ["quickMap", "osm"],
    [],
  ],
];

function Toolbar({ groups, tall }) {
  return (
    <ToolbarRow $tall={tall} role="toolbar">
      {groups.map((items, g) => (
        <Group key={g}>
          <Handle />
          {items.map((item, i) => {
            if (item === "|") return <Divider key={i} />;
            const name = item.replace(/[>!*]/g, "");
            const menu = item.includes(">");
            return (
              <ToolButton key={i} type="button" aria-label={name} disabled={item.includes("!")} $menu={menu} $active={item.includes("*")}>
                <Glyph name={name} />
                {menu && <Caret />}
              </ToolButton>
            );
          })}
        </Group>
      ))}
    </ToolbarRow>
  );
}

/* ------------------------------------------------------------------ */
/* Docks                                                                */
/* ------------------------------------------------------------------ */

const Workspace = styled.main`
  display: flex;
  flex: 1;
  min-height: 0;
  padding-top: 1px;
`;

const Sidebar = styled.aside`
  display: flex;
  flex-direction: column;
  flex: none;
  width: 511px;
`;

const Dock = styled.section`
  display: flex;
  flex-direction: column;
  flex: ${(p) => p.$share} 1 0;
  min-height: 0;
`;

const DockHeader = styled.div`
  display: flex;
  align-items: center;
  justify-content: space-between;
  flex: none;
  height: 20px;
  padding: 0 2px 0 4px;
`;

const DockTitle = styled.h2`
  margin: 0;
  font-size: 11px;
  line-height: 18px;
  font-weight: 400;
  color: #222;
`;

const DockButtons = styled.div`
  display: flex;
  gap: 3px;
`;

const DockButton = styled.button`
  width: 11px;
  height: 11px;
`;

const DockTools = styled.div`
  display: flex;
  align-items: center;
  gap: 9px;
  flex: none;
  height: 30px;
  padding: 0 0 2px 8px;
`;

const PanelTool = styled.button`
  display: flex;
  align-items: center;
  gap: 6px;
  height: 20px;
`;

const Splitter = styled.div`
  flex: none;
  ${(p) => (p.$vertical ? "width: 6px; height: 100%;" : "width: 100%; height: 7px;")}
  display: flex;
  align-items: center;
  justify-content: center;
  &::after {
    content: "";
    ${(p) => (p.$vertical ? "width: 1px; height: 17px;" : "width: 17px; height: 1px;")}
    background: repeating-linear-gradient(${(p) => (p.$vertical ? "180deg" : "90deg")}, #999 0 1px, transparent 1px 3px);
  }
`;

const TreeFrame = styled.div`
  display: flex;
  flex: 1;
  min-height: 0;
  border: 1px solid #b5b5b5;
  background: #fff;
`;

const TreeList = styled.ul`
  flex: 1;
  min-height: 0;
  overflow: hidden;
`;

const TreeRow = styled.li`
  display: flex;
  align-items: center;
  width: ${(p) => (p.$selected ? "344px" : "auto")};
  height: 18px;
  padding-left: ${(p) => p.$depth * 20}px;
  background: ${(p) => (p.$selected ? "#dcdcdc" : "transparent")};
  white-space: pre;
`;

const Toggle = styled.button`
  display: flex;
  justify-content: center;
  flex: none;
  width: 20px;
  margin-right: 3px;
`;

const TreeLabel = styled.span`
  margin-left: 6px;
  color: #000;
`;

const Twisty = ({ open }) => (
  <svg width="8" height="8" viewBox="0 0 8 8"><path d={open ? "M0 2h8L4 7z" : "M2 0v8l4-4z"} fill="#5c5c5c" /></svg>
);

const ScrollTrack = styled.div`
  display: flex;
  flex-direction: column;
  flex: none;
  width: 14px;
  border-left: 1px solid #bdbdbd;
  background: #e2e2e2;
`;

const ScrollStep = styled.button`
  display: flex;
  align-items: center;
  justify-content: center;
  flex: none;
  height: 13px;
  border-${(p) => p.$edge}: 1px solid #bdbdbd;
  background: #fafafa;
`;

const ThumbArea = styled.div`
  display: flex;
  flex-direction: column;
  flex: 1;
  min-height: 0;
`;

const ScrollThumb = styled.div`
  flex: 0 0 83%;
  border-bottom: 1px solid #b0b0b0;
  background: linear-gradient(90deg, #efefef, #fff 60%, #f2f2f2);
`;

/* depth, icon, label, state: o = open, c = closed, s = selected */
const tree = [
  [0, "star", "Favoriten", "o"],
  [1, "folderOpen", "/Users/knut/projects/GIS-curriculum/germany", "o"],
  [2, "folder", "module0", "c"],
  [2, "folder", "module1", "c"],
  [2, "folderOpen", "module2", "o"],
  [3, "folderOpen", "data", "o"],
  [4, "db", "Sachsen.gpkg", "o"],
  [5, "points", "McDonalds", "c"],
  [5, "raster", "Sachsen_SRTM_DEM", ""],
  [4, "sheet", "Sachsen_Burger-King.csv", ""],
  [4, "polygon", "Sachsen_ Gemeinden.fgb", "s"],
  [4, "polygon", "Sachsen_Landesgrenze.shp", ""],
  [4, "polygon", "Sachsen_Landkreise.geojson", ""],
  [3, "folder", "media", "c"],
  [2, "folder", "module3", "c"],
  [2, "folder", "module4", "c"],
  [2, "folder", "module5", "c"],
  [2, "folder", "module6", "c"],
  [2, "folder", "module7", "c"],
  [2, "folder", "module8", "c"],
  [2, "folder", "module9", "c"],
  [1, "folder", "/Users/knut/QGIS-Traning", "c"],
  [0, "bookmarkTree", "Räumliche Lesezeichen", "c"],
  [0, "home", "Home", "c"],
  [0, "folder", "/", "c"],
  [0, "folder", "/Volumes", "c"],
  [0, "pkg", "GeoPackage", "c"],
  [0, "feather", "SpatiaLite", ""],
  [0, "elephant", "PostGIS", ""],
  [0, "sail", "MSSQL", "c"],
  [0, "oracle", "Oracle", "c"],
  [0, "db2", "DB2", "c"],
  [0, "globe", "WMS/WMTS", "c"],
  [0, "gridDark", "Vector Tiles", ""],
  [0, "tiles", "XYZ Tiles", "o"],
  [1, "tiles", "OpenStreetMap", ""],
];

function DockBar({ title }) {
  return (
    <DockHeader>
      <DockTitle>{title}</DockTitle>
      <DockButtons>
        <DockButton type="button" aria-label="float">
          <svg width="11" height="11" viewBox="0 0 11 11" fill="none" stroke="#555">
            <rect x=".5" y=".5" width="10" height="10" rx="2" /><path d="M4.500 4.500v-2h4v4h-2M2.500 4.500h4v4h-4z" />
          </svg>
        </DockButton>
        <DockButton type="button" aria-label="close">
          <svg width="11" height="11" viewBox="0 0 11 11" fill="none" stroke="#555">
            <rect x=".5" y=".5" width="10" height="10" rx="2" /><path d="M3 3l5 5M8 3L3 8" strokeWidth="1.800" />
          </svg>
        </DockButton>
      </DockButtons>
    </DockHeader>
  );
}

const Tools = ({ names }) => (
  <DockTools>
    {names.map((n) => {
      const name = n.replace(">", "");
      return (
        <PanelTool key={n} type="button" aria-label={name}>
          <Glyph name={name} size={16} />
          {n.endsWith(">") && <Caret w={7} />}
        </PanelTool>
      );
    })}
  </DockTools>
);

function BrowserDock() {
  return (
    <Dock $share={689}>
      <DockBar title="Browser" />
      <Tools names={["addItem", "refresh", "filter", "collapse", "info"]} />
      <TreeFrame>
        <TreeList role="tree">
          {tree.map(([depth, icon, label, state], i) => (
            <TreeRow key={i} role="treeitem" $depth={depth} $selected={state === "s"}>
              <Toggle type="button" aria-label={label}>
                {(state === "o" || state === "c") && <Twisty open={state === "o"} />}
              </Toggle>
              <Glyph name={icon} size={16} />
              <TreeLabel>{label}</TreeLabel>
            </TreeRow>
          ))}
        </TreeList>
        <ScrollTrack>
          <ScrollStep type="button" aria-label="up" $edge="bottom">
            <svg width="7" height="4" viewBox="0 0 8 5"><path d="M0 5h8L4 0z" fill="#555" /></svg>
          </ScrollStep>
          <ThumbArea><ScrollThumb /></ThumbArea>
          <ScrollStep type="button" aria-label="down" $edge="top"><Caret w={7} /></ScrollStep>
        </ScrollTrack>
      </TreeFrame>
    </Dock>
  );
}

const LayerRow = styled.li`
  display: flex;
  align-items: center;
  gap: 6px;
  height: 18px;
  padding-left: 23px;
  background: ${(p) => (p.$current ? "#dcdcdc" : "transparent")};
`;

const CheckBox = styled.input`
  appearance: none;
  flex: none;
  width: 14px;
  height: 14px;
  border: 1px solid #b9b9b9;
  border-radius: 1px;
  background: #fff;
  &:checked {
    background: #fff url('data:image/svg+xml,<svg xmlns="http://www.w3.org/2000/svg" viewBox="0 0 12 12"><path d="M2.500 6l2.500 3.500L9.500 2" fill="none" stroke="%23222" stroke-width="1.800"/></svg>') center / 12px 12px;
  }
`;

const Swatch = styled.span`
  width: 16px;
  height: 16px;
  border: 1px solid rgba(0, 0, 0, 0.3);
  background: ${(p) => p.$fill};
`;

const LayerName = styled.label`
  font-weight: 700;
  color: ${(p) => (p.$current ? "#000" : "#2c2c2c")};
  text-decoration: ${(p) => (p.$current ? "underline" : "none")};
`;

const layers = [
  ["Sachsen_ Gemeinden", "#c0697a"],
  ["Sachsen_Landkreise", "#e9708f"],
  ["Sachsen_Landesgrenze", "#fd9a14"],
];

function LayerDock() {
  const [hidden, setHidden] = useState({});
  return (
    <Dock $share={545}>
      <DockBar title="Layer" />
      <Tools names={["brush", "addGroup", "eye", "filter", "epsilon>", "expand", "collapse", "removeItem"]} />
      <TreeFrame>
        <TreeList>
          {layers.map(([name, fill], i) => (
            <LayerRow key={name} $current={i === 0}>
              <CheckBox
                id={`layer-${i}`}
                type="checkbox"
                checked={!hidden[name]}
                onChange={() => setHidden({ ...hidden, [name]: !hidden[name] })}
              />
              <Swatch $fill={fill} />
              <LayerName htmlFor={`layer-${i}`} $current={i === 0}>{name}</LayerName>
            </LayerRow>
          ))}
        </TreeList>
      </TreeFrame>
    </Dock>
  );
}

/* ------------------------------------------------------------------ */
/* Map                                                                  */
/* ------------------------------------------------------------------ */

/* The state is digitised on two sheets, each with its own grid. */
const west = ([x, y, r]) => [980 + x / 2.8, 530 + y / 3, r];
const east = ([x, y, r]) => [1480 + x / 2.958, 530 + y / 3, r];
const parse = (s) => s.trim().split(/\s+/).map((t) => t.split(",").map(Number));

const northWest = parse(`757,748 740,733 733,693 722,686 697,693 675,680 655,680 660,665 637,660 635,622 600,615 593,605
550,609 520,605 505,602 503,590 480,585 447,594 420,583 390,577 393,567 415,558 400,549 370,547 370,527 375,510 350,509
367,493 370,478 363,455 352,440 346,412 336,405 330,385 365,375 360,345 350,330 358,315 350,298 358,285 336,283 330,255
352,248 355,238 372,226 378,213 367,205 367,190 400,172 408,160 440,163 470,155 515,140 562,142 580,120 600,126 640,125
690,117 705,108 735,102 735,112 765,100 790,70 840,78 870,78 890,68 920,50 940,72 965,68 970,85 1010,85 1035,68 1050,63
1072,72 1072,90 1103,87 1130,115 1150,118 1160,112 1195,132 1182,155 1190,163 1218,165 1237,205 1217,235 1233,262
1212,280 1228,285 1237,310 1260,317 1280,315 1287,320 1305,300 1340,290 1380,285 1400,263 1415,280 1432,292 1460,292
1460,300 1505,310 1512,327 1522,335`);

const eastRim = parse(`160,323 175,328 182,338 240,338 270,340 328,345 345,343 390,335 398,325 440,332 500,318 518,315
525,333 542,332 552,312 585,297 597,272 582,245 578,240 620,243 615,228 635,203 665,198 672,180 730,184 770,190 822,193
850,212 858,202 905,180 948,178 955,167 1010,167 1042,163 1040,153 1065,145 1090,155 1097,175 1165,170 1182,150 1180,130
1190,128 1208,147 1198,168 1210,190 1275,205 1320,228 1385,235 1412,250 1428,275 1418,285 1425,320 1435,340 1432,355
1448,378 1482,405 1488,432 1483,460 1468,475 1458,515 1450,545 1448,570 1437,572 1435,600 1420,625 1405,655 1380,685
1380,703 1365,703 1358,738 1330,752 1290,785 1293,800 1275,820 1270,845 1240,840 1200,840 1193,827 1160,820 1140,812
1108,808 1122,770 1137,765 1137,743 1090,752 1057,752 1057,742 1083,718 1090,692 1060,673 1035,675 1030,665 1000,657
996,640 992,657 960,648 920,662 895,657 875,640 850,640 833,628 815,632 803,645 803,665 785,685 800,693 842,695 842,705
828,710 845,723 890,735 908,740 905,750 895,772 860,778 820,785 798,778 765,787 750,805 710,820 660,830 613,852 575,857
540,848 505,860 495,872 455,872 445,893 457,908 445,920 418,930 350,922 300,928 275,938 240,925 225,930 205,942 120,945`);

const southWest = parse(`1514,950 1525,970 1505,995 1508,1010 1485,1015 1455,1043 1420,1030 1395,1010 1380,1003 1375,1025
1332,1043 1335,1063 1312,1067 1295,1052 1272,1052 1255,1085 1225,1135 1205,1132 1172,1125 1140,1138 1105,1138 1085,1130
1078,1155 1075,1187 1040,1213 1010,1224 970,1200 905,1178 895,1197 885,1187 832,1200 806,1230 775,1215 700,1225 637,1235
617,1258 620,1277 595,1280 570,1300 545,1300 543,1325 512,1340 500,1365 507,1378 485,1380 487,1420 485,1441 455,1438
438,1420 452,1400 440,1385 408,1370 440,1352 405,1348 373,1348 372,1325 358,1305 305,1305 275,1297 245,1297 210,1283
182,1275 185,1245 160,1232 135,1208 107,1193 112,1185 138,1183 152,1165 175,1148 150,1130 140,1117 105,1122 91,1103
105,1088 135,1085 137,1062 190,1040 205,1015 217,1022 210,1037 230,1052 228,1088 262,1085 270,1067 325,1072 298,1055
328,1038 330,1020 352,1022 372,1030 375,1012 402,1022 430,1005 470,990 472,972 430,963 418,942 430,928 397,918 400,897
430,900 445,880 418,873 410,857 440,850 458,840 470,845 520,820 555,813 575,822 605,785 640,767 690,770 750,765`);

/* Municipality centres with an approximate radius */
const westTowns = parse(`405,195,12 345,258,6 400,242,10 510,185,18 590,145,10 600,205,10 690,135,10 690,195,15 510,230,7
590,250,10 430,275,6 485,275,4 760,180,8 790,115,16 885,95,14 930,80,8 900,130,10 1000,95,6 950,155,9 1055,185,18
1050,80,8 1080,110,10 1150,135,9 1190,195,12 1135,205,5 800,210,12 880,205,15 945,210,15 700,255,10 745,240,8
1000,262,12 1070,260,14 1150,258,14 680,285,8
640,320,9 720,305,8 790,290,8 850,275,6 915,310,18 1035,320,12 1150,310,12 1210,300,5 380,320,10 475,350,26 570,365,26
680,360,6 740,340,9 800,355,9 880,365,12 720,380,6 1030,400,18 1130,350,6 1170,355,12 1145,400,10 1210,400,8 375,410,11
390,480,8 545,430,9 600,430,7 480,440,6 680,410,7 670,450,8 740,440,8 820,415,9 885,460,26 740,490,7 450,480,9 520,490,6
600,475,10 570,500,5 395,540,5 410,510,6 470,555,14 570,540,9 545,590,5 640,570,11 665,510,6 760,535,9 890,550,14
1010,510,16 1060,460,8 1190,450,8 1130,490,7 1200,495,6 1150,520,6 1170,560,12 1060,560,8 1020,585,7 700,620,18
780,650,9 850,610,8 930,590,5 985,605,7 1085,605,7 1050,625,5 1210,600,8 880,640,6 930,650,5 990,655,8 1040,680,5
1110,660,10 1225,650,14 900,680,5 780,720,14 840,705,6 930,710,6 1015,710,6 1150,720,12 870,745,5 930,745,6 1025,750,12
1120,765,12 830,770,4 855,772,3 900,775,4 1215,790,14 980,840,32 1075,800,6 1120,810,6 1130,850,8 1190,860,8 1270,390,10
1335,335,14 1395,375,6 1395,330,6 1440,300,6 1480,320,8 1480,375,18 1430,420,8 1340,430,9 1260,440,6 1310,480,10
1420,480,8 1495,455,14 1390,540,10 1310,550,16 1330,605,16 1460,535,8 1510,580,22 1350,495,5 1490,640,14 1390,660,9
1310,680,11 1390,710,8 1500,710,13 1280,745,8 1350,760,10 1440,785,12 1530,740,3 1300,810,9 1390,830,7 1520,790,14
1400,870,8 1340,870,7 1510,860,12 1280,860,6 1420,930,8 1250,930,15 1165,915,7 1400,900,5 1350,960,16 1480,970,11
1400,985,4 1440,1000,5 1470,1025,4 1430,1020,3 1215,1010,16 1320,1050,5 1310,1020,8 1160,1060,8 1180,1095,9 1100,1105,6
1150,1020,6 1090,1000,7 1120,960,8 1060,1060,9 1000,1050,5 640,790,7 690,780,6 720,785,5 590,830,7 520,840,9 450,860,7
680,845,10 640,810,5 770,800,7 800,830,5 830,850,5 730,870,5 770,880,6 800,900,5 840,880,5 420,910,7 470,900,9 540,910,9
540,870,5 440,945,7 505,955,7 610,915,12 625,965,13 690,910,8 720,920,5 680,960,6 550,980,7 510,1000,5 775,970,11
800,935,6 850,940,6 900,910,8 940,890,5 930,940,7 830,980,6 920,1000,14 700,1010,7 750,1020,5 640,1010,6 590,1020,5
530,1030,8 440,1020,8 390,1035,6 345,1040,5 450,1050,5 520,1060,8 600,1065,5 640,1060,6 690,1050,5 740,1050,6
790,1035,5 830,1030,6 870,1070,8 890,1040,4 960,1060,11 975,1015,8 1020,1020,5 970,960,5 1000,950,5 1040,940,6
1080,920,6 1050,980,6 1010,970,5 1120,915,6 600,1100,6 640,1100,5 700,1090,6 760,1080,6 790,1110,6 850,1105,8
930,1120,10 980,1105,4 1030,1090,6 1050,1140,13 1000,1150,9 850,1160,15 695,1165,18 755,1165,18 800,1200,8 1030,1195,10
910,1160,6 640,1200,12 570,1160,8 550,1120,8 600,1140,6 500,1125,7 460,1100,9 400,1110,8 370,1080,8 315,1130,17
205,1115,13 185,1065,9 115,1100,8 215,1190,20 345,1210,10 290,1205,5 300,1240,5 260,1255,7 300,1265,7 350,1260,7
210,1270,5 410,1245,8 470,1235,13 460,1195,6 420,1170,5 400,1200,5 430,1200,4 490,1170,4 530,1155,3 520,1190,6
550,1220,6 580,1250,11 410,1290,9 495,1310,13 400,1330,6 465,1390,10 380,1150,6 440,1140,5 300,1290,5`).map(west);

const eastTowns = parse(`230,370,12 280,360,8 340,380,8 335,430,9 310,400,5 235,440,16 410,385,14 385,345,6 500,345,10
460,330,6 505,410,9 585,385,9 600,340,11 645,300,8 580,430,5 410,465,14 300,490,9 380,515,8 450,520,8 500,480,5 510,515,6
260,525,8 170,495,6 210,520,5 160,525,5 200,550,7 230,575,8 360,610,38 450,560,6 220,620,14 540,590,10 470,570,6
600,545,7 610,585,10 640,550,4 560,500,6 540,455,5 590,475,7 590,515,5 665,480,9 640,420,11 690,370,12 690,430,6
720,400,5 760,395,9 740,440,6 755,325,12 720,345,5 730,490,6 700,510,5 700,570,13 640,525,5 770,540,7 775,570,6
745,225,20 650,255,8 680,280,10 740,280,10 810,285,8 820,330,6 850,250,5 920,230,20 920,325,24 830,375,11 840,420,9
810,450,4 780,450,4 870,450,6 920,430,10 820,500,9 910,500,13 850,550,12 820,590,6 870,590,6 910,555,5 950,590,8
950,555,6 870,615,7 930,640,10 630,640,10 570,600,6 540,640,7 600,650,8 750,640,15 690,700,14 640,700,5 640,655,5
990,190,11 1060,210,7 1065,160,8 1130,180,6 1190,175,5 1110,215,10 1010,235,6 1000,255,5 1080,310,32 1200,240,12
1210,195,5 1290,220,16 1390,260,12 1250,300,14 1300,295,10 1330,340,11 1240,325,7 1390,330,11 1190,360,8 1260,370,9
1170,400,7 1210,410,7 1300,390,6 1370,395,8 1400,360,9 1260,440,12 1290,400,6 1350,460,11 1440,430,13 1400,420,7
1100,430,14 1140,430,6 1030,410,11 1000,450,10 960,410,8 1010,510,10 1130,500,10 1070,535,11 1040,500,8 1070,480,8
1200,490,6 1180,450,5 1260,490,8 1330,505,7 1400,500,9 1440,500,8 1250,545,12 1160,570,17 1340,570,13 1410,560,10
1210,600,7 1020,590,7 1060,585,5 1010,620,5 1050,615,4 1090,610,4 1110,590,5 1130,620,4 1085,640,5 1120,640,5 1040,650,7
1000,545,6 1240,670,17 1270,610,8 1360,625,9 1340,650,5 1160,665,9 1150,700,8 1100,690,6 1200,715,8 1080,740,6 1120,730,6
1170,740,7 1270,740,9 1325,710,10 1400,620,5 1150,780,7 1200,780,7 1235,775,5 1250,795,6 1180,805,5 1230,825,6 1270,820,7
1400,650,5 1370,685,8 220,780,13 215,830,13 270,685,7 210,670,9 330,690,8 420,710,7 350,715,6 300,720,6 240,720,6
200,705,5 480,700,11 390,745,6 440,740,5 320,800,18 405,800,11 455,790,7 490,755,6 520,815,16 540,745,4 570,730,5
600,740,5 620,730,4 560,700,4 580,715,3 530,720,4 590,770,8 640,750,5 600,815,11 655,800,8 715,795,10 690,765,6
350,890,26 270,880,5 430,840,7 170,850,5 150,830,4 190,890,6 210,910,8 160,920,9 740,700,8 790,720,9 850,755,11
780,760,8`).map(east);

const towns = [...westTowns, ...eastTowns];

/* Repeatable noise in -1..1 */
const noise = (a, b, c = 0) => {
  const s = Math.sin(a * 12.9898 + b * 78.233 + c * 37.719) * 43758.5453;
  return (s - Math.floor(s)) * 2 - 1;
};

/* Noise blended smoothly over a lattice */
function smooth(x, y, scale, seed) {
  const gx = Math.floor(x / scale);
  const gy = Math.floor(y / scale);
  const ease = (t) => t * t * (3 - 2 * t);
  const u = ease(x / scale - gx);
  const v = ease(y / scale - gy);
  const top = noise(gx, gy, seed) * (1 - u) + noise(gx + 1, gy, seed) * u;
  const low = noise(gx, gy + 1, seed) * (1 - u) + noise(gx + 1, gy + 1, seed) * u;
  return top * (1 - v) + low * v;
}

const warp = ([x, y]) => [
  x + smooth(x, y, 15, 1) * 8 + smooth(x, y, 6, 2) * 3,
  y + smooth(x, y, 15, 3) * 5 + smooth(x, y, 6, 4) * 2,
];

/* Fractal line between two points, excluding the first one */
function rough(a, b, amp, min, out) {
  const dx = b[0] - a[0];
  const dy = b[1] - a[1];
  const len = Math.hypot(dx, dy);
  if (len < min) {
    out.push(b);
    return;
  }
  const k = noise(a[0] + b[0], a[1] + b[1]) * amp;
  const mid = [(a[0] + b[0]) / 2 - dy * k, (a[1] + b[1]) / 2 + dx * k];
  rough(a, mid, amp, min, out);
  rough(mid, b, amp, min, out);
}

const toPath = (pts) => "M" + pts.map(([x, y]) => `${x.toFixed(1)} ${y.toFixed(1)}`).join("L");

function borderPath() {
  const ring = [...northWest.map(west), ...eastRim.map(east), ...southWest.map(west)];
  const pts = [ring[0]];
  ring.forEach((p, i) => rough(p, ring[(i + 1) % ring.length], 0.22, 3, pts));
  return toPath(pts) + "Z";
}

/* Weighted Voronoi edges; cells are stretched east-west */
const STRETCH = 1.45;
function municipalityPaths() {
  const sites = towns.map(([x, y, r]) => ({ x, y: y * STRETCH, w: r ** 2 * 1.1 }));
  const edges = new Map();
  sites.forEach((s) => {
    let poly = [[s.x - 130, s.y - 130], [s.x + 130, s.y - 130], [s.x + 130, s.y + 130], [s.x - 130, s.y + 130]];
    sites.forEach((t) => {
      if (t === s || Math.abs(t.x - s.x) > 190 || Math.abs(t.y - s.y) > 190) return;
      const ax = 2 * (t.x - s.x);
      const ay = 2 * (t.y - s.y);
      const c = t.x * t.x + t.y * t.y - s.x * s.x - s.y * s.y + s.w - t.w;
      const side = (p) => ax * p[0] + ay * p[1] - c;
      const next = [];
      poly.forEach((p, i) => {
        const q = poly[(i + 1) % poly.length];
        const dp = side(p);
        const dq = side(q);
        if (dp <= 0) next.push(p);
        if (dp * dq < 0) {
          const f = dp / (dp - dq);
          next.push([p[0] + (q[0] - p[0]) * f, p[1] + (q[1] - p[1]) * f]);
        }
      });
      poly = next;
    });
    poly.forEach((p, i) => {
      const q = poly[(i + 1) % poly.length];
      const a = [Math.round(p[0] * 2) / 2, Math.round((p[1] / STRETCH) * 2) / 2];
      const b = [Math.round(q[0] * 2) / 2, Math.round((q[1] / STRETCH) * 2) / 2];
      const flip = a[0] > b[0] || (a[0] === b[0] && a[1] > b[1]);
      const [m, n] = flip ? [b, a] : [a, b];
      if (m[0] !== n[0] || m[1] !== n[1]) edges.set(`${m}|${n}`, [m, n]);
    });
  });
  return [...edges.values()].map(([a, b]) => {
    const pts = [a];
    rough(a, b, 0.36, 2.5, pts);
    return toPath(pts.map(warp));
  }).join("");
}

const border = borderPath();
const inner = municipalityPaths();

const Canvas = styled.section`
  flex: 1;
  min-width: 0;
  border: 1px solid #b5b5b5;
  background: #fff;
`;

const MapView = () => (
  <Canvas>
    <svg width="100%" height="100%" viewBox="518 171 2041 1238" preserveAspectRatio="xMidYMid meet">
      <clipPath id="state"><path d={border} /></clipPath>
      <path d={border} fill="#c33a38" />
      <path d={inner} clipPath="url(#state)" fill="none" stroke="#3a2224" strokeWidth="1" strokeLinejoin="round" />
      <path d={border} fill="none" stroke="#3b3434" strokeWidth="1.200" strokeLinejoin="round" />
    </svg>
  </Canvas>
);

/* ------------------------------------------------------------------ */
/* Status bar                                                           */
/* ------------------------------------------------------------------ */

const StatusBar = styled.footer`
  display: flex;
  align-items: center;
  justify-content: space-between;
  flex: none;
  height: 30px;
  padding: 0 8px 0 4px;
  font-size: 11px;
`;

const fieldBox = css`
  display: flex;
  align-items: center;
  height: 23px;
  border: 1px solid #a9a9a9;
  border-radius: 3px;
  background: #fff;
`;

const SearchBox = styled.label`
  ${fieldBox}
  width: 255px;
  gap: 7px;
  padding-left: 8px;
`;

const SearchInput = styled.input`
  flex: 1;
  min-width: 0;
  padding: 0;
  border: 0;
  outline: 0;
  background: none;
  font-size: 13px;
  &::placeholder { color: #757575; opacity: 1; }
`;

const StatusItems = styled.div`
  display: flex;
  align-items: center;
`;

const Field = styled.div`
  display: flex;
  align-items: center;
  gap: ${(p) => p.$inner || 4}px;
  margin-right: ${(p) => p.$gap}px;
`;

const Box = styled.div`
  ${fieldBox}
  width: ${(p) => p.$w}px;
`;

const BoxInput = styled.input`
  flex: 1;
  min-width: 0;
  height: 100%;
  padding: 0 4px;
  border: 0;
  outline: 0;
  background: none;
  text-align: ${(p) => (p.$center ? "center" : "left")};
`;

const Spin = styled.div`
  display: flex;
  flex-direction: column;
  justify-content: center;
  gap: 4px;
  width: 14px;
  height: 100%;
  border-left: 1px solid #b9b9b9;
  background: #f7f7f7;
`;

const SpinStep = styled.button`
  display: flex;
  justify-content: center;
`;

const ScaleSelect = styled.select`
  appearance: none;
  flex: 1;
  min-width: 0;
  height: 100%;
  padding: 0 4px;
  border: 0;
  outline: 0;
  background: none;
`;

const ScaleArrow = styled.span`
  display: flex;
  align-items: center;
  justify-content: center;
  width: 20px;
  height: 100%;
  border-left: 1px solid #b9b9b9;
`;

const IconButton = styled.button`
  display: flex;
  align-items: center;
  gap: 2px;
  color: #333;
`;

const SpinField = ({ id, label, value, width, gap, inner: space }) => (
  <Field $gap={gap} $inner={space}>
    <label htmlFor={id}>{label}</label>
    <Box $w={width}>
      <BoxInput id={id} defaultValue={value} />
      <Spin>
        <SpinStep type="button" aria-label="up"><svg width="7" height="5" viewBox="0 0 8 5"><path d="M0 5h8L4 0z" fill="#555" /></svg></SpinStep>
        <SpinStep type="button" aria-label="down"><Caret w={7} /></SpinStep>
      </Spin>
    </Box>
  </Field>
);

function Status() {
  const [render, setRender] = useState(true);
  return (
    <StatusBar>
      <SearchBox>
        <svg width="13" height="13" viewBox="0 0 13 13" fill="none" stroke="#777" strokeWidth="1.200"><circle cx="5.200" cy="5.200" r="4.300" /><path d="M8.500 8.500l4 4" /></svg>
        <SearchInput type="text" placeholder="Zu suchender Typ (⌘K)" />
      </SearchBox>
      <StatusItems>
        <Field $gap={4}>
          <label htmlFor="coord">Koordinate</label>
          <Box $w={95}><BoxInput id="coord" defaultValue="14.553,52.403" $center /></Box>
        </Field>
        <Field $gap={14}>
          <IconButton type="button" aria-label="extents">
            <svg width="16" height="18" viewBox="0 0 16 18" fill="none" stroke="#444">
              <path d="M2 1l5 6M6 1l4 6M1 4l8 12M10 7l4-5M9 8l6-3" strokeWidth="1.400" />
              <ellipse cx="8" cy="11" rx="4" ry="5.500" transform="rotate(-30 8 11)" fill="#ddd" /><path d="M5 9l6 4M4 12l5 3" />
            </svg>
          </IconButton>
        </Field>
        <Field $gap={10}>
          <label htmlFor="scale">Maßstab</label>
          <Box $w={92}>
            <ScaleSelect id="scale" defaultValue="1:447004"><option>1:447004</option></ScaleSelect>
            <ScaleArrow><Caret /></ScaleArrow>
          </Box>
        </Field>
        <Field $gap={8}>
          <IconButton type="button" aria-label="lock">
            <svg width="14" height="15" viewBox="0 0 14 15"><path d="M3.500 7V4.500a3.500 3.500 0 0 1 7 0V7" fill="none" stroke="#666" strokeWidth="1.500" /><rect x="1.500" y="6.500" width="11" height="8.500" rx="1" fill="#5c5c5c" /></svg>
          </IconButton>
        </Field>
        <SpinField id="zoom" label="Vergrößerung" value="100%" width={90} gap={9} />
        <SpinField id="rotation" label="Drehung" value="0,0 °" width={92} gap={6} inner={10} />
        <Field $gap={18} $inner={5}>
          <CheckBox id="render" type="checkbox" checked={render} onChange={() => setRender(!render)} />
          <label htmlFor="render">Zeichnen</label>
        </Field>
        <Field $gap={23}>
          <IconButton type="button">
            <svg width="15" height="15" viewBox="0 0 15 15" fill="#ccc" stroke="#555"><circle cx="7.500" cy="7.500" r="6" /><path d="M0 7.500h15M2 4h11M2 11h11M7.500 1v13M7.500 1q-6 6.500 0 13M7.500 1q6 6.500 0 13" fill="none" strokeWidth=".9" /></svg>
            EPSG:4326
          </IconButton>
        </Field>
        <IconButton type="button" aria-label="messages">
          <svg width="16" height="16" viewBox="0 0 16 16"><ellipse cx="8" cy="7" rx="8" ry="6.500" fill="#555" /><path d="M8 12l5 4v-5z" fill="#555" /><g fill="#eee"><circle cx="4" cy="7" r="1.200" /><circle cx="8" cy="7" r="1.200" /><circle cx="12" cy="7" r="1.200" /></g></svg>
        </IconButton>
      </StatusItems>
    </StatusBar>
  );
}

/* ------------------------------------------------------------------ */

export default function App() {
  return (
    <Desktop>
      <GlobalStyle />
      <MenuBar>
        <MenuList>
          <Apple />
          <MenuItem type="button" $strong>QGIS</MenuItem>
          {menus.map((m) => <MenuItem key={m} type="button">{m}</MenuItem>)}
        </MenuList>
        <MenuStatus>
          <Dot />
          <ControlCentre />
          <time>Thu 25. Feb  07:56</time>
        </MenuStatus>
      </MenuBar>
      <Window>
        <TitleBar>
          <Lights>
            <Light type="button" aria-label="close" $fill="#ff5b52" $edge="#e0443e" />
            <Light type="button" aria-label="minimise" $fill="#fdb025" $edge="#dea123" />
            <Light type="button" aria-label="zoom" $fill="#28c131" $edge="#1aab29" />
          </Lights>
          <WindowTitle>*Unbenanntes Projekt — QGIS</WindowTitle>
        </TitleBar>
        {toolbars.map((groups, i) => <Toolbar key={i} groups={groups} tall={i === 1} />)}
        <Workspace>
          <Sidebar>
            <BrowserDock />
            <Splitter />
            <LayerDock />
          </Sidebar>
          <Splitter $vertical />
          <MapView />
        </Workspace>
        <Status />
      </Window>
    </Desktop>
  );
}
